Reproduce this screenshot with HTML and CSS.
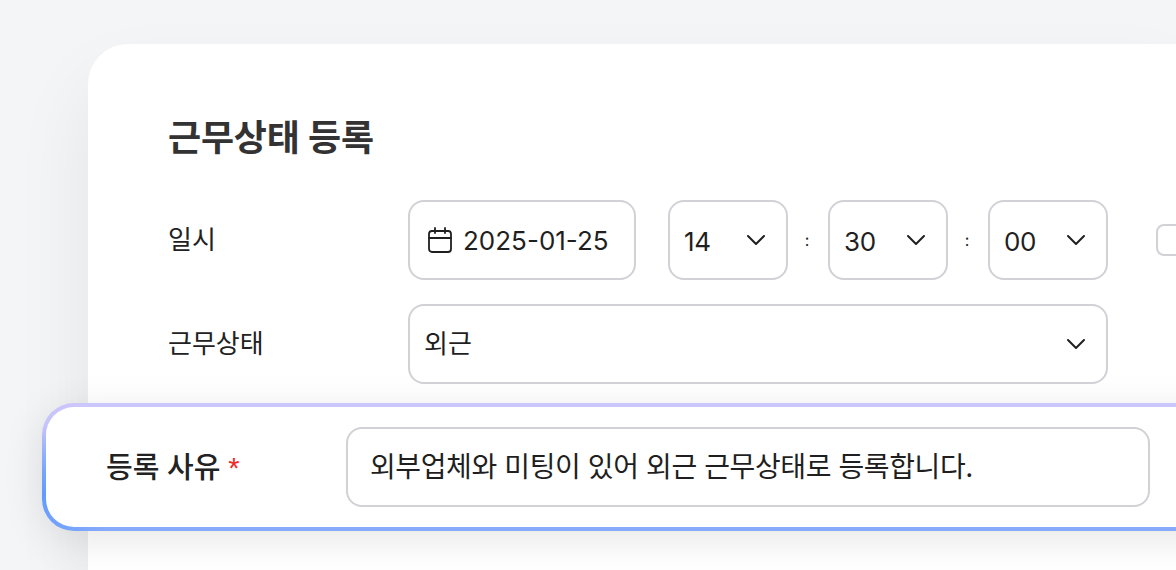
FILE: index.html
```html
<!DOCTYPE html>
<html lang="ko">
<head>
<meta charset="utf-8">
<title>근무상태 등록</title>
<link rel="stylesheet" href="styles.css">
</head>
<body>
<main class="card">
  <h1 class="title">근무상태 등록</h1>
  <div class="row row-date">
    <span class="label">일시</span>
    <div class="controls">
      <div class="field field-date">
        <svg class="cal" viewBox="0 0 24 26" fill="none" stroke="#1f1f1f" stroke-width="1.8" stroke-linecap="round" stroke-linejoin="round"><rect x="1" y="4" width="22" height="21" rx="3"/><path d="M1 11h22M7 1v5M17 1v5"/></svg>
        <span>2025-01-25</span>
      </div>
      <div class="field field-time"><span class="val">14</span><svg class="chev" viewBox="0 0 20 12"><path d="M2 2l8 8 8-8"/></svg></div>
      <span class="colon">:</span>
      <div class="field field-time"><span class="val">30</span><svg class="chev" viewBox="0 0 20 12"><path d="M2 2l8 8 8-8"/></svg></div>
      <span class="colon">:</span>
      <div class="field field-time"><span class="val">00</span><svg class="chev" viewBox="0 0 20 12"><path d="M2 2l8 8 8-8"/></svg></div>
      <span class="check"></span>
    </div>
  </div>
  <div class="row row-status">
    <span class="label">근무상태</span>
    <div class="field field-status"><span class="val-ko">외근</span><svg class="chev" viewBox="0 0 20 12"><path d="M2 2l8 8 8-8"/></svg></div>
  </div>
  <div class="highlight">
    <span class="hl-label">등록 사유 <span class="req">*</span></span>
    <div class="field field-reason">외부업체와 미팅이 있어 외근 근무상태로 등록합니다.</div>
  </div>
</main>
</body>
</html>
```
FILE: styles.css
```css
* { box-sizing: border-box; }
html, body { margin: 0; height: 570px; overflow: hidden; }
body {
  background: #f4f5f7;
  color: #1f1f1f;
  font-family: "Inter", "Noto Sans CJK KR", sans-serif;
  padding: 44px 0 0 88px;
}
.card {
  width: 1088px;
  height: 526px;
  background: #fff;
  border-radius: 40px 0 0 0;
  box-shadow: 0 40px 80px rgba(0, 0, 0, .07);
  padding: 66px 0 0 80px;
}
.title {
  margin: 0 0 34px;
  font-size: 36px;
  line-height: 56px;
  font-weight: 700;
  color: #333;
  letter-spacing: -.2px;
}
.row { display: flex; align-items: center; }
.row-date { height: 80px; margin-bottom: 24px; }
.row-status { height: 80px; margin-bottom: 19px; }
.label {
  width: 240px;
  flex: none;
  padding-bottom: 6px;
  font-size: 26px;
  font-weight: 400;
  color: #222;
}
.controls { display: flex; align-items: center; }
.field {
  display: flex;
  align-items: center;
  height: 80px;
  background: #fff;
  border: 2px solid #d1d1d6;
  border-radius: 16px;
  font-size: 26px;
}
.field-date { width: 228px; padding-left: 18px; margin-right: 32px; gap: 11px; }
.cal { width: 24px; height: 26px; flex: none; }
.field-time { width: 120px; padding: 0 20px 0 14px; justify-content: space-between; }
.val { padding-top: 2px; letter-spacing: -.3px; }
.chev { width: 20px; height: 12px; fill: none; stroke: #1f1f1f; stroke-width: 2; stroke-linecap: round; stroke-linejoin: round; }
.colon { width: 40px; padding-right: 2px; text-align: center; }
.check { width: 40px; height: 32px; flex: none; margin-left: 48px; border: 2px solid #d1d1d6; border-radius: 8px; }
.field-status { width: 700px; padding: 0 20px 0 14px; justify-content: space-between; }
.val-ko { padding-bottom: 6px; }
.highlight {
  display: flex;
  align-items: center;
  width: 1214px;
  height: 128px;
  margin-left: -126px;
  padding-left: 60px;
  border: 4px solid transparent;
  border-radius: 32px 0 0 32px;
  background:
    linear-gradient(#fff, #fff) padding-box,
    radial-gradient(circle at 0 72%, #5f9bff 0, rgba(95, 155, 255, 0) 70px) border-box,
    linear-gradient(180deg, #cbc6fb 0%, #c4c2fb 25%, #85a9fb 100%) border-box;
  box-shadow: 0 8px 40px rgba(0, 0, 0, .1);
}
.hl-label { width: 240px; flex: none; padding-bottom: 4px; font-size: 29px; font-weight: 500; color: #222; }
.req { color: #ef2b2b; font-family: "Liberation Sans", sans-serif; font-weight: 400; }
.field-reason { width: 804px; padding: 0 0 4px 22px; font-size: 28px; letter-spacing: -.4px; }
```
